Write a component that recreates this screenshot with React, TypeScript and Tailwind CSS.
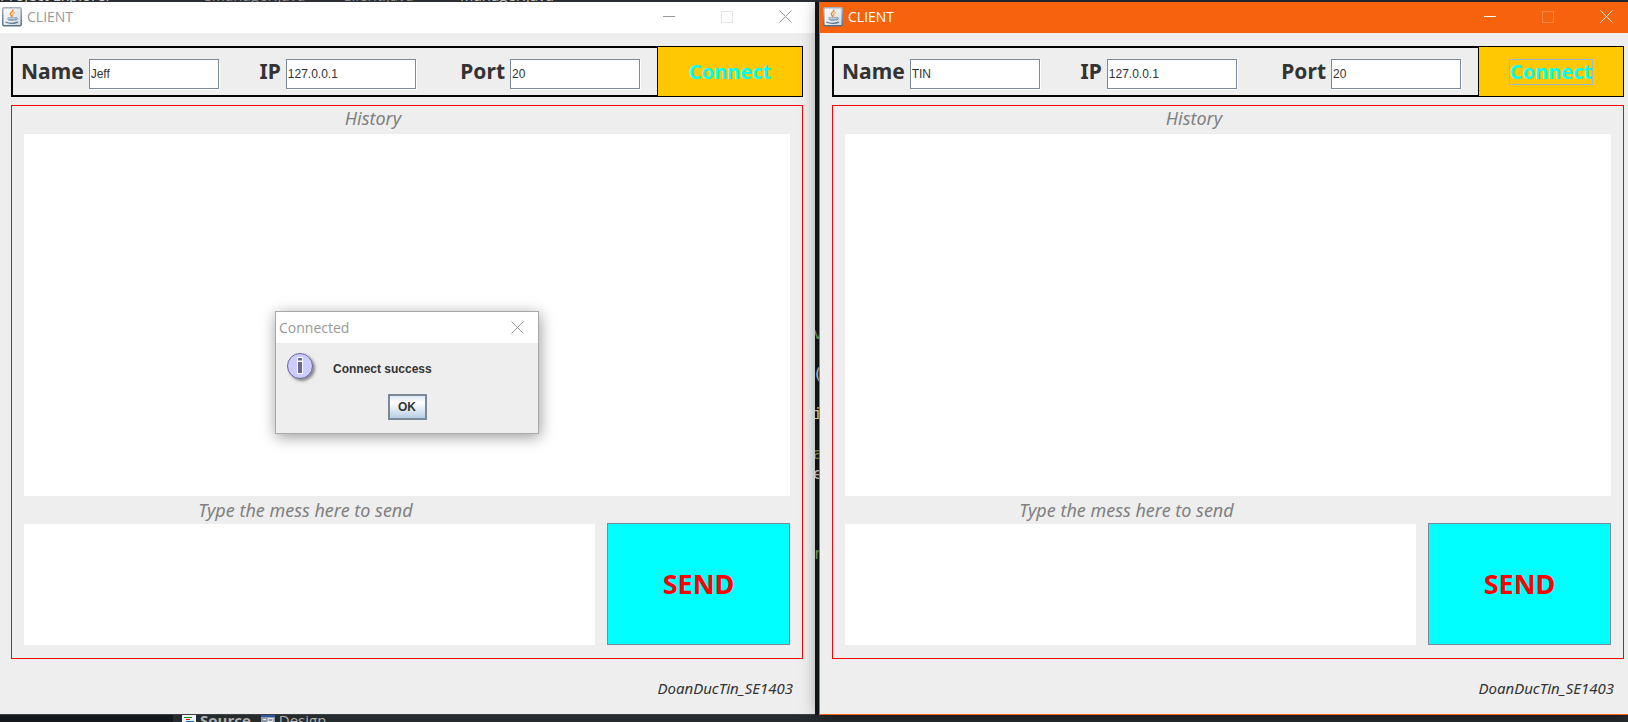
import { clsx } from "clsx";
import { useId, useState } from "react";

type ClientProps = {
  name: string;
  active?: boolean;
  children?: React.ReactNode;
};

const codeLines = [
  { text: "v", className: "text-[#7fb060]" },
  { text: "", className: "" },
  { text: "(", className: "text-[#d0ecf8]" },
  { text: "", className: "" },
  { text: "i", className: "text-[#fff0b8]" },
  { text: "", className: "" },
  { text: "a", className: "text-[#90a650]" },
  { text: "e", className: "text-[#e8e0d4]" },
  { text: "", className: "" },
  { text: "", className: "" },
  { text: "", className: "" },
  { text: "r", className: "text-[#7fb060]" },
];

function JavaIcon() {
  return (
    <svg viewBox="0 0 20 20" className="h-5 w-5 shrink-0" aria-hidden="true">
      <defs>
        <linearGradient id="java-bg" x1="0" y1="0" x2="1" y2="1">
          <stop offset="0" stopColor="#ffffff" />
          <stop offset="1" stopColor="#d3d9de" />
        </linearGradient>
        <linearGradient id="java-edge" x1="0" y1="0" x2="0" y2="1">
          <stop offset="0" stopColor="#a3b1bd" />
          <stop offset="1" stopColor="#56708a" />
        </linearGradient>
      </defs>
      <rect x="0.75" y="0.75" width="18.5" height="18" rx="1.5" fill="url(#java-bg)" stroke="url(#java-edge)" strokeWidth="1.5" />
      <path d="M10.8 3c.9 1.600-2.900 2.400-2.500 4.200.2.800 1 1.100 1.200 2.100" fill="none" stroke="#e8822b" strokeWidth="1.400" strokeLinecap="round" />
      <path d="M12.600 5.400c-1.500.600-2.300 1.200-2 2.100.2.600.6.900.2 1.700" fill="none" stroke="#f0a050" strokeWidth="1.100" strokeLinecap="round" />
      <path d="M5.500 10.300h8v1.800c0 1.200-1.500 1.900-4 1.900s-4-.7-4-1.900z" fill="#8ba5ba" />
      <path d="M6 11.600h7" stroke="#d3dfe8" strokeWidth="0.700" />
      <path d="M13.500 10.800c2.600-.7 2.400 2.100-.5 2.200" fill="none" stroke="#5b7a96" />
      <path d="M4 15.300c2.500 1.400 9 1.400 11.500-.2" fill="none" stroke="#5b7a96" strokeWidth="1.300" strokeLinecap="round" />
    </svg>
  );
}

function CloseIcon() {
  return (
    <svg viewBox="0 0 13 13" className="h-[13px] w-[13px]" fill="none" stroke="currentColor" aria-hidden="true">
      <path d="M.5.5l12 12M12.500.5l-12 12" />
    </svg>
  );
}

function InfoIcon() {
  return (
    <svg viewBox="0 0 32 32" className="h-8 w-8 shrink-0" aria-hidden="true">
      <defs>
        <filter id="info-shadow" x="-30%" y="-30%" width="170%" height="170%">
          <feDropShadow dx="2" dy="2" stdDeviation="1.500" floodColor="#000" floodOpacity="0.450" />
        </filter>
      </defs>
      <circle cx="13" cy="13" r="12.500" fill="#ccccff" stroke="#666699" filter="url(#info-shadow)" />
      <path d="M10 4h6v4.500h-6zM10 8.500h6V21h-6z" fill="#fff" />
      <path d="M11 5h4v2.500h-4zM11 9h4v11h-4z" fill="#666699" />
    </svg>
  );
}

function Field({ label, initial }: { label: string; initial: string }) {
  const id = useId();
  const [value, setValue] = useState(initial);

  return (
    <div className="flex items-center justify-end gap-[5px]">
      <label htmlFor={id} className="pb-0.5 font-['Noto_Sans'] text-[21px] leading-7 font-bold text-[#333333]">
        {label}
      </label>
      <input
        id={id}
        value={value}
        onChange={(event) => setValue(event.target.value)}
        className="mt-1 h-[30px] w-[130px] border border-[#7a8a99] bg-white px-px font-['Liberation_Sans'] text-xs text-[#333333] shadow-[1px_1px_0_white] outline-none"
      />
    </div>
  );
}

function ClientWindow({ name, active, children }: ClientProps) {
  const [history, setHistory] = useState("");
  const [message, setMessage] = useState("");
  const id = useId();

  return (
    <section
      className={clsx(
        "relative flex min-w-0 flex-col bg-[#eeeeee]",
        active ? "z-10 border-b border-l border-[#f7630c] shadow-[0_0_16px_rgba(0,0,0,0.5)]" : "border-b border-[#3c4043]"
      )}
    >
      <header className={clsx("flex h-[31px] items-center gap-[14px] pb-0.5", active ? "bg-[#f7630c] pl-[3px] text-white" : "bg-white pr-2 pl-[2px] text-[#999999]")}>
        <div className="flex flex-1 items-center gap-[5px]">
          <JavaIcon />
          <h1 className="font-['Open_Sans'] text-sm leading-5">CLIENT</h1>
        </div>
        <button type="button" aria-label="Minimize" className="flex h-full w-11 items-center justify-center">
          <span className="h-px w-3 bg-current" />
        </button>
        <button type="button" aria-label="Maximize" disabled className="flex h-full w-11 items-center justify-center">
          <span className={clsx("h-3 w-3 border", active ? "border-[#fb8a48]" : "border-[#e5e5e5]")} />
        </button>
        <button type="button" aria-label="Close" className="flex h-full w-11 items-center justify-center">
          <CloseIcon />
        </button>
      </header>

      <div className={clsx("flex flex-1 flex-col pt-[13px]", active ? "pr-1 pl-3" : "pr-3 pl-[11px]")}>
        <form className="flex h-[51px]" onSubmit={(event) => event.preventDefault()}>
          <div className="grid flex-1 grid-cols-[197fr_197fr_224fr] items-center border-2 border-r-0 border-black pr-[17px] pl-2">
            <Field label="Name" initial={name} />
            <Field label="IP" initial="127.0.0.1" />
            <Field label="Port" initial="20" />
          </div>
          <button type="submit" className="flex w-[146px] items-center justify-center border border-black bg-[#ffc800] font-['Noto_Sans'] text-xl leading-6 font-bold text-[#00ffff]">
            <span className={clsx("border", active ? "border-[#a3b8cc]" : "border-transparent")}>Connect</span>
          </button>
        </form>

        <div className="mt-2 flex flex-1 flex-col border border-[#ff0000] px-3 pb-[13px]">
          <label htmlFor={`${id}-history`} className="pr-[68px] pb-1 text-center font-['Noto_Sans'] text-lg leading-6 text-[#808080] italic">
            History
          </label>
          <textarea
            id={`${id}-history`}
            value={history}
            onChange={(event) => setHistory(event.target.value)}
            className="block w-full flex-1 resize-none bg-white p-1 outline-none"
          />
          <div className="flex gap-3">
            <div className="flex flex-1 flex-col">
              <label htmlFor={`${id}-message`} className="pr-2 text-center font-['Noto_Sans'] text-lg leading-7 text-[#808080] italic">
                Type the mess here to send
              </label>
              <textarea
                id={`${id}-message`}
                value={message}
                onChange={(event) => setMessage(event.target.value)}
                className="block h-[121px] w-full resize-none bg-white p-1 outline-none"
              />
            </div>
            <button type="button" className="mt-[27px] w-[183px] border border-[#7a8a99] bg-[#00ffff] font-['Noto_Sans'] text-[27px] font-bold text-[#ff0000]">
              SEND
            </button>
          </div>
        </div>

        <footer className="flex h-[55px] items-center justify-end pt-1 pr-[10px] font-['Noto_Sans'] text-[15px] text-[#333333] italic">
          DoanDucTin_SE1403
        </footer>
      </div>
      {children}
    </section>
  );
}

function ConnectedDialog() {
  const [open, setOpen] = useState(true);
  if (!open) return null;

  return (
    <div
      role="dialog"
      aria-label="Connected"
      className="absolute top-[309px] left-[275px] w-[264px] border border-[#a9a9a9] bg-[#eeeeee] shadow-[1px_3px_14px_rgba(0,0,0,0.4)]"
    >
      <div className="flex h-[31px] items-center bg-white pl-[3px] font-['Open_Sans'] text-sm text-[#999999]">
        <h2 className="flex-1">Connected</h2>
        <button type="button" aria-label="Close" onClick={() => setOpen(false)} className="flex h-full w-[42px] items-center justify-center">
          <CloseIcon />
        </button>
      </div>
      <div className="flex flex-col items-center pt-[10px] pb-[13px] font-['Liberation_Sans'] text-xs font-bold text-[#333333]">
        <div className="flex w-full gap-[14px] pl-[11px]">
          <InfoIcon />
          <p className="pt-2">Connect success</p>
        </div>
        <button
          type="button"
          onClick={() => setOpen(false)}
          className="mt-[9px] h-[26px] w-[39px] border-2 border-[#7a8a99] bg-linear-to-b from-[#dde8f3] via-white via-30% to-[#b8cfe5]"
        >
          OK
        </button>
      </div>
    </div>
  );
}

function EditorTabs() {
  return (
    <div className="flex h-[2px] items-end gap-8 overflow-hidden bg-[#2b2f33] font-['Open_Sans'] text-[15px] leading-[14px] whitespace-nowrap text-[#8c8c8c]">
      <span className="w-[170px] text-[#d0d0d0]">Project Explorer ×</span>
      <span className="w-[108px]">CManager.java</span>
      <span className="w-[86px]">Client.java</span>
      <span className="text-[#c0c0c0]">Manager.java ×</span>
    </div>
  );
}

export default function App() {
  return (
    <main className="flex min-h-screen flex-col bg-[#262b2e]">
      <EditorTabs />
      <div className="grid flex-1 grid-cols-[815fr_4px_809fr]">
        <ClientWindow name="Jeff">
          <ConnectedDialog />
        </ClientWindow>
        <div className="overflow-hidden bg-[#15191b] pt-[322px] font-['DejaVu_Sans_Mono'] text-base leading-5" aria-hidden="true">
          {codeLines.map((line, index) => (
            <p key={index} className={clsx("-ml-0.5 h-5", line.className)}>
              {line.text}
            </p>
          ))}
        </div>
        <ClientWindow name="TIN" active />
      </div>
      <div className="flex h-[7px] overflow-hidden font-['Open_Sans'] text-[15px] leading-[10px] text-[#b0b0b0]">
        <div className="w-[173px] bg-[#15181c]" />
        <div className="flex pl-[9px]">
          <svg viewBox="0 0 14 14" className="mr-1 h-[14px] w-[14px]" aria-hidden="true">
            <path d="M0 0h14v14H0z" fill="#eef2ff" />
            <path d="M2 2.500h8" stroke="#0a8a1a" />
            <path d="M4 4.500h4" stroke="#d01010" />
            <path d="M4 6.500h8" stroke="#1565d8" />
          </svg>
          <span className="font-bold">Source</span>
          <svg viewBox="0 0 14 14" className="mr-1 ml-[10px] h-[14px] w-[14px]" aria-hidden="true">
            <path d="M0 0h14v14H0z" fill="#8d99a8" />
            <path d="M0 0h14v2H0z" fill="#2f55a0" />
            <path d="M2 4.500h3M7 3.500h5v3H7zM2 7.500h3" stroke="#e8edf2" fill="none" />
          </svg>
          <span>Design</span>
        </div>
      </div>
    </main>
  );
}
